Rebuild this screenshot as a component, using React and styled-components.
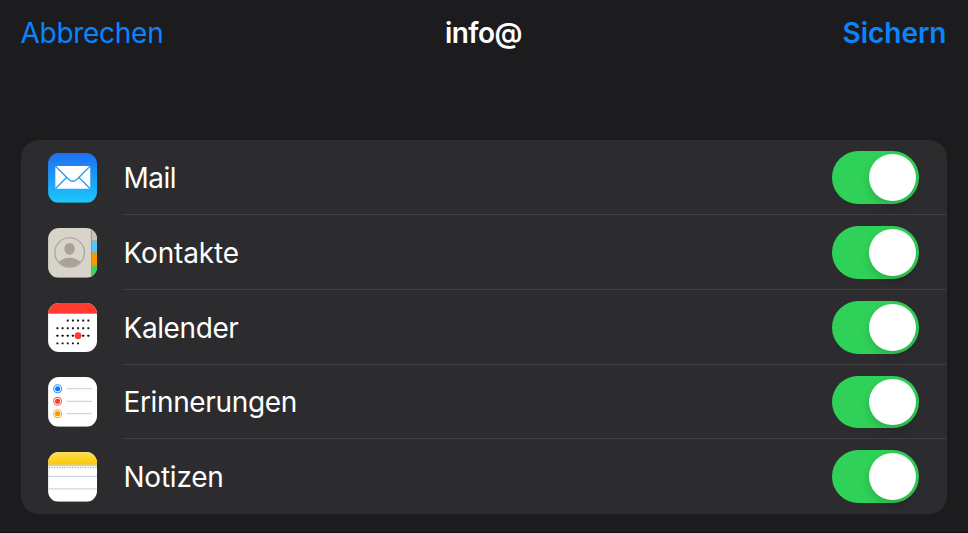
import { useState } from "react";
import styled, { createGlobalStyle } from "styled-components";

const MailIcon = () => (
  <svg viewBox="0 0 50 50">
    <defs>
      <linearGradient id="mail-bg" x1="0" y1="0" x2="0" y2="1">
        <stop offset="0" stopColor="#1e6ff2" />
        <stop offset="1" stopColor="#1ac8fc" />
      </linearGradient>
    </defs>
    <rect width="50" height="50" fill="url(#mail-bg)" />
    <rect x="7.3" y="13.2" width="35.2" height="22.8" rx="1.6" fill="#fff" />
    <g fill="none" stroke="#2f9bf5" strokeWidth="1.4">
      <path d="M7.8 13.6 L20.6 26.4 Q24.9 30.7 29.2 26.4 L42 13.6" />
      <path d="M7.8 35.6 L18.6 24.8 M42 35.6 L31.2 24.8" />
    </g>
  </svg>
);

const ContactsIcon = () => (
  <svg viewBox="0 0 50 50">
    <defs>
      <clipPath id="avatar">
        <circle cx="21.7" cy="24.7" r="14.6" />
      </clipPath>
    </defs>
    <rect width="50" height="50" fill="#d8d4ca" />
    <circle cx="21.7" cy="24.7" r="14.9" fill="none" stroke="#a9a29a" strokeWidth="1.2" />
    <g clipPath="url(#avatar)" fill="#a9a29a">
      <ellipse cx="21.7" cy="21" rx="5.3" ry="6" />
      <ellipse cx="21.7" cy="38.5" rx="12" ry="8.6" />
    </g>
    <rect x="43.8" width="6.2" height="12.6" fill="#c9c5bc" />
    <rect x="43.8" y="12.9" width="6.2" height="11.9" fill="#58c4f8" />
    <rect x="43.8" y="25" width="6.2" height="12.5" fill="#ff9500" />
    <rect x="43.8" y="37.8" width="6.2" height="12.2" fill="#3fd15b" />
    <path d="M43.8 12.7 H50 M43.8 24.9 H50 M43.8 37.6 H50" stroke="#8a7a5c" strokeWidth="0.4" />
    <rect x="43.2" width="0.8" height="50" fill="#8f8b82" />
  </svg>
);

const columns = [9.4, 14.6, 19.8, 25, 30.2, 35.4, 40.6];
const weeks = [
  { y: 17.7, from: 2, to: 7 },
  { y: 25.4, from: 0, to: 7 },
  { y: 33, from: 0, to: 7 },
  { y: 40.7, from: 0, to: 5 },
];

const CalendarIcon = () => (
  <svg viewBox="0 0 50 50">
    <rect width="50" height="50" fill="#fff" />
    <rect width="50" height="10.8" fill="#ff3b30" />
    {weeks.map(({ y, from, to }) =>
      columns
        .slice(from, to)
        .map((x) => <rect key={`${x}-${y}`} x={x - 1} y={y - 1} width="2" height="2" rx="0.4" fill="#111" />)
    )}
    <circle cx="30.2" cy="33" r="3.4" fill="#ff3b30" />
  </svg>
);

const reminders = [
  { y: 11.8, color: "#0a7aff" },
  { y: 24.5, color: "#ff3b30" },
  { y: 37, color: "#ff9500" },
];

const RemindersIcon = () => (
  <svg viewBox="0 0 50 50">
    <rect width="50" height="50" fill="#fff" />
    {reminders.map(({ y, color }) => (
      <g key={color}>
        <circle cx="9.6" cy={y} r="4" fill="none" stroke={color} strokeWidth="1.1" strokeOpacity="0.8" />
        <circle cx="9.6" cy={y} r="2.6" fill={color} />
        <path d={`M18.6 ${y} H44.2`} stroke="#c7c7cc" strokeWidth="0.9" />
      </g>
    ))}
  </svg>
);

const NotesIcon = () => (
  <svg viewBox="0 0 50 50">
    <defs>
      <linearGradient id="notes-bg" x1="0" y1="0" x2="0" y2="1">
        <stop offset="0" stopColor="#fddf5c" />
        <stop offset="1" stopColor="#fdc800" />
      </linearGradient>
    </defs>
    <rect width="50" height="50" fill="#fff" />
    <rect width="50" height="12.8" fill="url(#notes-bg)" />
    <rect y="12.8" width="50" height="0.9" fill="#b5ae9a" />
    <path d="M0.8 15.5 H50" stroke="#aaa" strokeWidth="1.1" strokeDasharray="1.3 1.3" />
    <path d="M0 24.6 H50 M0 37.2 H50" stroke="#c9c9cc" strokeWidth="1" />
  </svg>
);

const services = [
  { name: "Mail", Icon: MailIcon, spacing: "-0.5px" },
  { name: "Kontakte", Icon: ContactsIcon, spacing: "-0.15px" },
  { name: "Kalender", Icon: CalendarIcon, spacing: "-0.4px" },
  { name: "Erinnerungen", Icon: RemindersIcon, spacing: "-0.36px" },
  { name: "Notizen", Icon: NotesIcon, spacing: "-0.22px" },
];

const App = () => {
  const [disabled, setDisabled] = useState([]);

  const toggle = (name) =>
    setDisabled((list) => (list.includes(name) ? list.filter((n) => n !== name) : [...list, name]));

  return (
    <Screen>
      <GlobalStyle />
      <NavBar>
        <NavButton $spacing="-0.28px">Abbrechen</NavButton>
        <Title>info@</Title>
        <NavButton $bold $spacing="0px">
          Sichern
        </NavButton>
      </NavBar>
      <List>
        {services.map(({ name, Icon, spacing }) => {
          const on = !disabled.includes(name);
          return (
            <Row key={name}>
              <IconBox>
                <Icon />
              </IconBox>
              <RowContent>
                <Label $spacing={spacing}>{name}</Label>
                <Switch role="switch" aria-checked={on} aria-label={name} $on={on} onClick={() => toggle(name)}>
                  <Knob />
                </Switch>
              </RowContent>
            </Row>
          );
        })}
      </List>
    </Screen>
  );
};

export default App;

const GlobalStyle = createGlobalStyle`
  * {
    box-sizing: border-box;
  }

  body {
    margin: 0;
    background-color: #1c1c1e;
    font-family: Inter, "Liberation Sans", sans-serif;
    -webkit-font-smoothing: antialiased;
  }
`;

const Screen = styled.div`
  height: 533px;
  padding: 0 21.5px 0 20.5px;
  border-bottom: 1px solid #101011;
  background-color: #1c1c1e;
  overflow: hidden;
`;

const NavBar = styled.div`
  display: grid;
  grid-template-columns: 1fr auto 1fr;
  align-items: center;
  height: 66px;
  margin-bottom: 74.45px;
  font-size: 28px;
  line-height: 34px;
`;

const NavButton = styled.button`
  justify-self: ${({ $bold }) => ($bold ? "end" : "start")};
  border: none;
  padding: 0;
  background: none;
  color: #0a84ff;
  font: inherit;
  font-weight: ${({ $bold }) => ($bold ? 600 : 400)};
  letter-spacing: ${({ $spacing }) => $spacing};
  cursor: pointer;
`;

const Title = styled.div`
  color: #fff;
  font-weight: 600;
  letter-spacing: -0.5px;
`;

const List = styled.div`
  border-radius: 18px;
  background-color: #2c2c2e;
  overflow: hidden;
`;

const Row = styled.div`
  display: flex;
  align-items: center;
  height: 74.75px;
  padding-left: 27.2px;
`;

const IconBox = styled.div`
  width: 49.8px;
  height: 49.6px;
  margin-top: 0.3px;
  border-radius: 11px;
  overflow: hidden;

  svg {
    display: block;
    width: 100%;
    height: 100%;
  }
`;

const RowContent = styled.div`
  display: flex;
  flex: 1;
  align-items: center;
  justify-content: space-between;
  height: 100%;
  margin-left: 26px;
  padding: 1px 27.5px 0 0;
  border-bottom: 1px solid #404043;

  ${Row}:last-child & {
    border-bottom-color: transparent;
  }
`;

const Label = styled.span`
  padding-top: 0.6px;
  color: #fff;
  font-size: 28px;
  line-height: 34px;
  letter-spacing: ${({ $spacing }) => $spacing};
`;

const Switch = styled.button`
  display: flex;
  align-items: center;
  justify-content: ${({ $on }) => ($on ? "flex-end" : "flex-start")};
  width: 87.5px;
  height: 52.8px;
  padding: 0 3px;
  border: none;
  border-radius: 27px;
  background-color: ${({ $on }) => ($on ? "#30d158" : "#39393d")};
  cursor: pointer;
`;

const Knob = styled.span`
  width: 46.8px;
  height: 46.8px;
  border-radius: 50%;
  background-color: #fff;
  box-shadow: 0 4px 9px rgba(0, 0, 0, 0.16);
`;
